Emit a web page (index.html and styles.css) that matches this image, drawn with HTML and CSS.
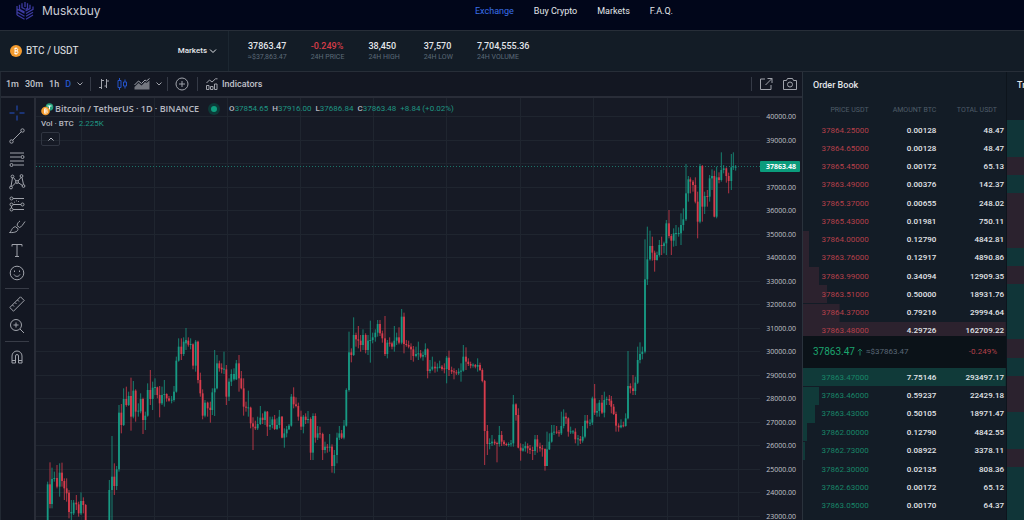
FILE: index.html
```html
<!DOCTYPE html>
<html lang="en">
<head>
<meta charset="utf-8">
<title>Muskxbuy Exchange</title>
<link rel="stylesheet" href="styles.css">
</head>
<body>
<header class="topbar">
  <a class="brand" href="#">
    <svg class="logo" viewBox="0 0 18 20" aria-hidden="true">
      <path d="M1 5v9M3.500 3.800v4.400l5 2.800M6 2.300v4.300l3 1.700M9 1v5M1 8l7.500 4.300M1 11l7.500 4.300M1 14l7.500 4.300M11.500 2.300v5l-2 1.200M14 3.800v3.700L9.500 10M17 5.400v3L10 12.500M17 11.200l-7 4M17 14l-7 4.300"/>
    </svg>
    <span>Muskxbuy</span>
  </a>
  <nav class="nav">
    <a class="active" href="#">Exchange</a><a href="#">Buy Crypto</a><a href="#">Markets</a><a href="#">F.A.Q.</a>
  </nav>
</header>

<section class="ticker">
  <div class="pair">
    <svg class="coin" viewBox="0 0 12 12" aria-hidden="true"><circle cx="6" cy="6" r="6" fill="#f39a2d"/><path d="M4.600 3.500h1.900a1.200 1.200 0 0 1 0 2.400H5h1.700a1.300 1.300 0 0 1 0 2.600H4.400M5 3.500v5M5.400 2.600v1M6.600 2.600v1M5.400 8.500v1M6.600 8.500v1" fill="none" stroke="#fff" stroke-width=".9"/></svg>
    <span class="pair-name">BTC / USDT</span>
    <button class="markets" type="button">Markets <svg viewBox="0 0 8 6" aria-hidden="true"><path d="M1 1.500l3 3 3-3"/></svg></button>
  </div>
  <dl class="stats">
    <div><dd>37863.47</dd><dt>≈$37,863.47</dt></div>
    <div><dd class="down">-0.249%</dd><dt>24H PRICE</dt></div>
    <div><dd>38,450</dd><dt>24H HIGH</dt></div>
    <div><dd>37,570</dd><dt>24H LOW</dt></div>
    <div><dd>7,704,555.36</dd><dt>24H VOLUME</dt></div>
  </dl>
</section>

<main class="workspace">
  <section class="chart">
    <div class="toolbar">
      <div class="intervals">
        <button type="button">1m</button><button type="button">30m</button><button type="button">1h</button><button type="button" class="active">D</button>
        <button type="button" aria-label="More intervals"><svg class="chev" viewBox="0 0 6 4"><path d="M.5.5L3 3 5.500.5"/></svg></button>
      </div>
      <div class="styles">
        <button type="button" aria-label="Bars"><svg class="i12" viewBox="0 0 12 12"><path d="M3.500 1v10M1 9.500h2.500M3.500 2.500H6M8.500 1v9M6.500 8h2M8.500 3H11"/></svg></button>
        <button type="button" class="active" aria-label="Candles"><svg class="i12" viewBox="0 0 12 12"><path d="M2 2.500h3v7H2zM3.500 0v2.500M3.500 9.500V12M7.500 4h3v4h-3zM9 1.500V4M9 8v2.500"/></svg></button>
        <button type="button" aria-label="Area"><svg class="i16" viewBox="0 0 16 12"><path d="M.5 7l4-4 3 2.500L11 2l1.500 1L15.500.5"/><path class="solid" d="M.5 9l4-4 3 2.500L11 4l1.500 1 3-2.500V11.500H.5z"/></svg></button>
        <button type="button" aria-label="More styles"><svg class="chev" viewBox="0 0 6 4"><path d="M.5.5L3 3 5.500.5"/></svg></button>
      </div>
      <div class="compare">
        <button type="button" aria-label="Compare"><svg class="i14" viewBox="0 0 14 14"><circle cx="7" cy="7" r="6"/><path d="M7 4v6M4 7h6"/></svg></button>
      </div>
      <button type="button" class="indicators"><svg class="i12" viewBox="0 0 12 12"><path d="M.5 11.500v-4H3v4zM4.500 11.500v-3H7v3zM8.500 11.500V6H11v5.500zM.5 5l3-3 2.500 2L9.500.8M9.500.8h2"/></svg>Indicators</button>
      <div class="actions">
        <button type="button" aria-label="Open in window"><svg class="i14" viewBox="0 0 14 14"><path d="M6 2H1.500v10.500H12V8M8.500 1.500H13V6M13 1.500L6.500 8"/></svg></button>
        <button type="button" aria-label="Snapshot"><svg class="i14" viewBox="0 0 14 14"><path d="M.5 3.500h3l1-2h5l1 2h3v9H.5z"/><circle cx="7" cy="7.500" r="2.500"/></svg></button>
      </div>
    </div>
    <div class="canvas">
      <div class="tools">
        <div class="group long">
          <button type="button" class="active" aria-label="Cross"><svg viewBox="0 0 18 18"><path d="M9 1.500v5M9 11.500v5M1.500 9h5M11.500 9h5"/></svg></button>
          <button type="button" aria-label="Trend line"><svg viewBox="0 0 18 18"><circle cx="3.500" cy="14.500" r="1.700"/><circle cx="14.500" cy="3.500" r="1.700"/><path d="M4.700 13.300l8.600-8.600"/></svg></button>
          <button type="button" aria-label="Fibonacci"><svg viewBox="0 0 18 18"><path d="M2 3h14M2 7h10.500M2 11h14M5.500 15H16"/><circle cx="14.500" cy="7" r="1.500"/><circle cx="3.500" cy="15" r="1.500"/></svg></button>
          <button type="button" aria-label="Patterns"><svg viewBox="0 0 18 18"><path d="M3 13.500L4.500 4.500M5.500 4.500L8 8M10 8l3.500-4M14 4.500l1.500 7M8 9.500L4 13.500M10 9.500l4.500 3"/><circle cx="4.500" cy="3.500" r="1.400"/><circle cx="13.500" cy="3" r="1.400"/><circle cx="9" cy="9" r="1.400"/><circle cx="3" cy="14.500" r="1.400"/><circle cx="15.500" cy="13" r="1.400"/></svg></button>
          <button type="button" aria-label="Forecast"><svg viewBox="0 0 18 18"><path d="M5 3.500h11M5 9.500h8M5 14.500h11M3.500 11v2"/><circle cx="3.500" cy="3.500" r="1.500"/><circle cx="3.500" cy="9.500" r="1.500"/><circle cx="14.500" cy="9.500" r="1.500"/><circle cx="3.500" cy="14.500" r="1.500"/><path stroke-dasharray="1 1.500" d="M6 7.500l3-2 3 2"/></svg></button>
          <button type="button" aria-label="Brush"><svg viewBox="0 0 18 18"><path d="M1.500 14.500c2-.5 2-5.500 6-5.800l2.500 2c.4 2.500-3 4.300-8.500 3.800zM9 7.500c.5-2.500 1.500-3.500 3-4.500M11.500 9.500c2-.5 3-2.500 5.500-6M9 7.500l2.500 2"/></svg></button>
          <button type="button" aria-label="Text"><svg viewBox="0 0 18 18"><path d="M4 5.500V3.500h10v2M9 3.500v12M7 15.500h4"/></svg></button>
          <button type="button" aria-label="Emoji"><svg viewBox="0 0 18 18"><circle cx="9" cy="9" r="6.800"/><path d="M6 10.500c1.500 2.500 4.500 2.500 6 0M6.500 6.500v1.500M11.500 6.500v1.500"/></svg></button>
        </div>
        <div class="group">
          <button type="button" aria-label="Measure"><svg viewBox="0 0 18 18"><path d="M1.800 12.500L12.500 1.800l3.700 3.700L5.500 16.200zM4.500 10l1.500 1.500M7 7.500L8.500 9M9.500 5L11 6.500"/></svg></button>
          <button type="button" aria-label="Zoom in"><svg viewBox="0 0 18 18"><circle cx="8" cy="8" r="5.500"/><path d="M12 12l4 4M8 5.500v5M5.500 8h5"/></svg></button>
        </div>
        <div class="group">
          <button type="button" aria-label="Magnet"><svg viewBox="0 0 18 18"><path d="M4 15V8a5 5 0 0 1 10 0v7h-3.500V8a1.500 1.500 0 0 0-3 0v7zM4 12.500h3.500M10.500 12.500H14"/></svg></button>
        </div>
      </div>
      <div class="plot">
        <svg id="plot" viewBox="36 98 767 422" preserveAspectRatio="xMinYMin slice" role="img" aria-label="BTC price chart"></svg>
        <div class="legend">
          <div class="symbol">
            <svg class="pair-icon" viewBox="0 0 13 13" aria-hidden="true"><circle cx="8.500" cy="4" r="3.800" fill="#26a17b"/><path d="M6.500 3h4M8.500 3v3.500" stroke="#fff"/><circle cx="4.500" cy="8" r="4.300" fill="#f39a2d"/><path d="M3.500 6h1.800a.9.900 0 0 1 0 2H3.500h2a1 1 0 0 1 0 2h-2zM4 5v6" stroke="#fff" stroke-width=".7" fill="none"/></svg>
            <span class="name">Bitcoin / TetherUS · 1D · BINANCE</span>
            <span class="live"></span>
            <div class="ohlc"><span><b>O</b>37854.65</span><span><b>H</b>37916.00</span><span><b>L</b>37686.84</span><span><b>C</b>37863.48</span><span>+8.84 (+0.02%)</span></div>
          </div>
          <div class="volume">Vol · BTC <span>2.225K</span></div>
          <button type="button" class="fold" aria-label="Collapse legend"><svg class="chev" viewBox="0 0 6 4"><path d="M.5 3.500L3 1l2.500 2.500"/></svg></button>
        </div>
      </div>
    </div>
  </section>

  <section class="book">
    <h2>Order Book</h2>
    <div class="asks-view">
      <table class="asks">
        <thead><tr><th>PRICE USDT</th><th>AMOUNT BTC</th><th>TOTAL USDT</th></tr></thead>
        <tbody>
          <tr><td>37864.25000</td><td>0.00128</td><td>48.47</td></tr>
          <tr><td>37864.65000</td><td>0.00128</td><td>48.47</td></tr>
          <tr><td>37865.45000</td><td>0.00172</td><td>65.13</td></tr>
          <tr><td>37863.49000</td><td>0.00376</td><td>142.37</td></tr>
          <tr><td>37865.37000</td><td>0.00655</td><td>248.02</td></tr>
          <tr><td>37865.43000</td><td>0.01981</td><td>750.11</td></tr>
          <tr style="--depth:3%"><td>37864.00000</td><td>0.12790</td><td>4842.81</td></tr>
          <tr style="--depth:3%"><td>37863.76000</td><td>0.12917</td><td>4890.86</td></tr>
          <tr style="--depth:8%"><td>37863.99000</td><td>0.34094</td><td>12909.35</td></tr>
          <tr style="--depth:12%"><td>37863.51000</td><td>0.50000</td><td>18931.76</td></tr>
          <tr style="--depth:18%"><td>37864.37000</td><td>0.79216</td><td>29994.64</td></tr>
          <tr style="--depth:100%"><td>37863.48000</td><td>4.29726</td><td>162709.22</td></tr>
        </tbody>
      </table>
    </div>
    <div class="last"><strong>37863.47</strong><svg viewBox="0 0 6 8" aria-hidden="true"><path d="M3 7.500V1M.8 3.200L3 1l2.200 2.200"/></svg><span>≈$37863.47</span><em>-0.249%</em></div>
    <table class="bids" aria-label="Bids">
      <tbody>
        <tr style="--depth:100%"><td>37863.47000</td><td>7.75146</td><td>293497.17</td></tr>
        <tr style="--depth:8%"><td>37863.46000</td><td>0.59237</td><td>22429.18</td></tr>
        <tr style="--depth:6%"><td>37863.43000</td><td>0.50105</td><td>18971.47</td></tr>
        <tr style="--depth:2%"><td>37862.00000</td><td>0.12790</td><td>4842.55</td></tr>
        <tr style="--depth:1%"><td>37862.73000</td><td>0.08922</td><td>3378.11</td></tr>
        <tr><td>37862.30000</td><td>0.02135</td><td>808.36</td></tr>
        <tr><td>37862.63000</td><td>0.00172</td><td>65.12</td></tr>
        <tr><td>37863.05000</td><td>0.00170</td><td>64.37</td></tr>
      </tbody>
    </table>
  </section>

  <section class="trades">
    <h2>Tr</h2>
    <div class="tape" id="tape"></div>
  </section>
</main>
<script src="chart.js"></script>
</body>
</html>
```

FILE: styles.css
```css
* { box-sizing: border-box; }
:root {
  --line: #272e38;
  --panel: #131c26;
  --bg: #131722;
  --plot: #161a25;
  --icon: #a0a3ab;
  --green: #1a9a7c;
  --red: #c4434d;
}
body {
  margin: 0;
  height: 100vh;
  overflow: hidden;
  display: flex;
  flex-direction: column;
  background: var(--panel);
  color: #e3e6ea;
  font: 9px/12px Roboto, "Liberation Sans", sans-serif;
}
a { color: inherit; text-decoration: none; }
button {
  display: inline-flex;
  align-items: center;
  padding: 0;
  border: 0;
  background: none;
  color: inherit;
  font: inherit;
}
svg { display: block; fill: none; stroke: currentColor; }
h2 { margin: 0; padding: 7px 10px 8px; font-size: 9px; line-height: 12px; font-weight: 500; }

.topbar {
  flex: none;
  display: flex;
  height: 31px;
  padding: 0 16px 8px;
  align-items: center;
  background: #01061a;
  border-bottom: 1px solid var(--line);
}
.brand { display: flex; align-items: center; gap: 8px; width: 459px; font: 12px/16px Inter, sans-serif; color: #c9ccd4; }
.logo { width: 18px; height: 20px; color: #3c3aa0; stroke-width: 1.3; }
.nav { display: flex; gap: 20px; }
.nav .active { color: #3a6fe8; }

.ticker { flex: none; display: flex; height: 41px; border-bottom: 1px solid var(--line); }
.pair { display: flex; align-items: center; width: 229px; padding: 0 11px 0 10px; border-right: 1px solid #1c2731; }
.coin { width: 12px; height: 12px; stroke: none; margin-right: 4px; }
.pair-name { font-size: 10px; }
.markets { margin-left: auto; gap: 2px; font-size: 8px; font-weight: 500; }
.markets svg { width: 8px; height: 6px; }
.stats { display: flex; gap: 24px; margin: 0; padding: 9px 19px; }
.stats div { display: flex; flex-direction: column; }
.stats dd { margin: 0; line-height: 12px; font-weight: 500; }
.stats dt { font-size: 7px; line-height: 10px; color: #5c6a78; }
.stats .down { color: #d33c48; }

.workspace { flex: 1; display: flex; min-height: 0; }
.chart { flex: 1; min-width: 0; display: flex; flex-direction: column; background: var(--bg); border-left: 1px solid #222933; border-right: 1px solid #2a323c; }
.toolbar { flex: none; display: flex; align-items: center; height: 26px; border-bottom: 2px solid #292d38; color: #c0c3ca; font-weight: 500; }
.toolbar > div { display: flex; align-items: center; height: 14px; }
.toolbar > div:not(.actions) { border-right: 1px solid #353a46; }
.intervals { gap: 6px; padding: 0 7px 0 5px; }
.styles { gap: 6px; padding: 0 5px 0 7px; }
.compare { padding: 0 8px 0 7px; }
.indicators { gap: 4px; padding-left: 8px; }
.actions { margin-left: auto; gap: 10px; padding: 0 5px 0 7px; border-left: 1px solid #353a46; }
.toolbar svg { color: var(--icon); }
.toolbar .active, .toolbar .active svg, .tools .active { color: #2453c8; }
.chev { width: 6px; height: 4px; }
.i12 { width: 12px; height: 12px; }
.i14 { width: 14px; height: 14px; }
.i16 { width: 16px; height: 12px; }
.solid { fill: #74777f; stroke: none; }

.canvas { flex: 1; display: flex; min-height: 0; }
.tools { flex: none; width: 35px; padding: 4px 5px 0 4px; border-right: 2px solid #292d38; color: var(--icon); overflow: hidden; }
.group { display: grid; grid-auto-rows: 22px; }
.group.long { height: 182px; grid-auto-rows: 1fr; }
.group + .group { border-top: 1px solid #383c47; margin-top: 4px; padding-top: 4px; }
.tools button { justify-content: center; }
.tools svg { width: 18px; height: 18px; }

.plot { flex: 1; min-width: 0; position: relative; overflow: hidden; background: var(--plot); }
#plot { width: 100%; height: 100%; }
.grid { stroke: #1f252f; stroke-width: 1; shape-rendering: crispEdges; }
.now { stroke: #1b7469; stroke-dasharray: 1 2; }
.wick { stroke-width: .8; }
.up { stroke: #179a83; fill: #179a83; }
.dn { stroke: #d83c4c; fill: #d83c4c; }
.body { stroke: none; }
.axis { fill: #c2c5cc; stroke: none; font: 7px "Open Sans", sans-serif; text-anchor: end; }
.tag { fill: #0b9c7c; stroke: none; }
.tag-text { fill: #fff; font-weight: 700; }

.legend { position: absolute; top: 4px; left: 5px; color: #b6b9c1; }
.symbol { display: flex; align-items: center; height: 14px; }
.pair-icon { width: 13px; height: 13px; stroke: none; }
.name { margin-left: 1px; font: 600 9px/14px "Open Sans", sans-serif; white-space: nowrap; }
.live { width: 6px; height: 6px; margin: 0 12px; border-radius: 50%; background: #0f9f7f; box-shadow: 0 0 0 3px #0d3a38; }
.ohlc { display: flex; gap: 4px; font-size: 8px; color: #1f9582; white-space: nowrap; }
.ohlc b { color: #b6b9c1; font-weight: 500; }
.volume { margin-top: 2px; font-size: 8px; font-weight: 500; }
.volume span { margin-left: 3px; font-weight: 400; color: #1f9582; }
.fold { justify-content: center; width: 19px; height: 14px; margin-top: 2px; border: 1px solid #303541; border-radius: 2px; }

.book { flex: none; width: 204px; border-right: 1px solid #0d141c; }
table { width: 100%; border-collapse: collapse; table-layout: fixed; font-size: 8px; line-height: 12px; font-weight: 500; }
.asks-view { height: 237px; overflow: hidden; }
.asks { height: 241px; }
.bids { height: 147px; }
th, td { padding: 0 2px 0 0; text-align: right; }
th { height: 22px; font-size: 7px; font-weight: 400; color: #4f5c69; }
th:last-child { padding-right: 9px; }
td { height: 18px; padding-top: 1px; }
tbody tr { background: linear-gradient(var(--fill), var(--fill)) no-repeat left / var(--depth, 0%) 100%; }
.asks { --fill: #2c222e; }
.bids { --fill: #103a39; }
td:first-child { font-weight: 400; }
.asks td:first-child { color: #b5404a; }
.bids td:first-child { color: #188667; }
.last { display: flex; align-items: center; height: 32px; padding: 0 9px 0 10px; background: #0b1218; color: #5a6776; }
.last strong { font-size: 10px; font-weight: 400; color: #1ba46e; }
.last svg { width: 6px; height: 8px; margin: 0 3px 0 2px; color: #1b7a59; }
.last span { font-size: 8px; }
.last em { margin-left: auto; font-style: normal; font-size: 8px; color: #b5404a; }

.trades { flex: none; width: 17px; overflow: hidden; }
.trades h2 { white-space: nowrap; }
.tape { display: grid; grid-auto-rows: 1fr; height: 402px; margin-top: 21px; }
.buy { background: #103538; }
.sell { background: #2b222e; }
```

FILE: chart.js
```js
// Each segment: x origin, y origin, then candles as x, open, close, high, low (three units per chart pixel).
const segments = [
  [90, 900, `53 670 553 545 680;60 553 612 487 625;66 612 537 503 625;73 537 534 515 545;81 534 560 495 565;89 560 518 490 590;96 518 543 488 560;103 543 565 535 600;110 565 580 535 605;117 578 636 570 655;124 640 636 600 660;131 640 608 600 645;139 608 613 585 630;146 613 640 605 650;153 640 603 577 645;160 603 615 592 640;167 615 670 612 680;
238 670 570 540 680;246 570 530 408 660;253 530 558 490 585;260 558 508 498 570;267 508 338 315 515;274 338 375 312 400;281 375 297 265 378;289 297 315 260 320;296 315 288 275 318;303 288 350 233 392;310 350 272 243 355;317 272 335 268 365;325 335 332 310 350;332 334 297 280 340;339 297 360 293 402;346 360 347 335 390;353 347 270 250 350;361 270 297 210 315;368 297 263 245 330;375 263 261 235 285;382 262 285 260 295;389 285 310 258 352;396 310 285 260 315;403 285 282 240 320;410 282 295 280 305;417 295 302 288 305;425 302 299 288 310;432 300 275 258 305;439 275 182 170 278;446 182 140 115 185;454 140 162 115 180;461 162 125 112 168;468 130 120 84 150;475 122 134 112 140;482 134 132 115 148;489 133 197 130 208;497 197 125 120 215;504 125 240 122 250;511 240 280 218 290;518 280 347 268 358;525 347 308 300 352;533 308 325 305 350;541 323 330 305 368;547 330 277 265 345;554 277 265 150 348;561 265 190 165 268;568 190 205 182 215;575 203 208 190 220;582 209 206 155 222;589 208 290 195 315`],
  [660, 900, `27 290 245 235 303;34 245 222 208 258;42 238 222 205 242;49 238 190 180 240;57 190 235 165 275;64 235 265 213 268;71 265 320 235 347;78 320 323 305 335;85 325 322 272 350;92 323 370 320 385;99 370 380 352 450;106 380 385 362 390;113 385 372 350 390;121 372 353 318 375;128 353 360 340 372;135 360 335 332 375;142 335 380 333 408;150 380 375 350 390;157 375 358 350 385;164 358 387 345 390;171 387 375 355 390;178 375 350 330 385;186 350 413 348 415;193 413 400 385 443;200 400 388 378 412;207 388 377 372 390;214 377 290 282 380;221 290 313 262 325;228 313 318 292 322;235 318 350 308 362;243 350 380 332 390;250 380 350 345 400;257 350 360 340 372;264 360 357 333 370;272 357 458 352 480;279 458 348 340 480;286 348 413 340 428;293 413 400 378 420;300 400 403 380 415;308 402 450 398 480;315 450 440 425 460;322 440 443 432 458;329 443 440 402 455;336 440 498 433 518;343 498 465 450 520;351 465 413 398 490;358 413 400 378 420;365 400 413 390 417;372 413 377 360 418;379 377 270 265 380;387 270 157 95 275;394 157 165 145 187;401 165 105 52 168;408 105 118 98 140;415 118 122 78 145;422 122 135 105 155;429 135 105 88 150;437 105 150 100 160;444 150 122 105 165;451 123 120 62 188;458 120 112 98 130;466 112 98 88 125;473 98 72 60 110;480 72 100 60 108;487 100 115 92 128;495 115 162 48 168;502 162 128 120 175;509 128 131 112 140;516 130 140 125 148;523 140 122 78 155;530 122 112 98 135;537 112 128 82 133;545 128 50 27 133`],
  [1200, 900, `12 50 132 38 160;19 132 135 120 140;26 135 140 122 145;33 140 148 130 180;40 148 168 138 185;48 168 162 140 172;55 163 160 125 180;62 160 170 150 175;69 170 165 155 182;76 165 148 130 172;83 148 213 145 235;90 213 208 180 220;97 208 200 170 212;105 200 205 185 218;112 205 202 190 215;119 203 200 182 205;126 200 207 195 212;133 205 208 190 220;140 207 173 168 250;147 173 210 152 228;155 210 215 200 222;162 214 217 205 238;169 217 220 210 225;176 220 215 205 225;183 215 212 190 245;190 212 170 135 215;198 170 185 142 210;205 185 192 175 198;212 192 197 185 205;219 197 194 190 203;226 195 200 192 205;233 200 195 175 215;240 195 210 188 213;247 210 243 205 247;254 243 393 240 495;262 393 432 375 465;269 432 429 415 448;276 430 425 405 438;284 425 430 418 435;291 429 432 425 487;298 432 405 378 440;305 405 425 393 438;312 425 432 420 437;319 432 435 428 438;326 435 432 427 440;333 433 430 420 440;340 430 313 285 440;348 313 345 310 362;355 345 443 325 445;362 443 452 430 482;369 452 445 432 455;376 445 438 425 455;383 438 445 430 460;390 445 450 435 462;398 450 453 440 480;405 453 418 405 465;412 418 440 405 458;420 440 445 428 455;427 445 448 435 470;435 447 498 445 512;441 498 448 395 498;448 448 425 400 450;455 425 398 375 428;462 398 395 375 405;470 395 398 378 402;477 397 400 390 410;484 400 378 335 405;491 378 350 328 385;498 350 355 338 372;505 355 395 352 410;512 397 394 380 402;519 397 394 390 402;526 395 418 385 430;534 418 415 405 437;541 417 422 408 432;548 422 410 378 428;555 410 362 345 415;562 362 370 345 385;570 371 368 358 378;577 368 295 290 375;584 295 338 252 345;591 338 333 310 350;598 333 308 300 350`],
  [1710, 840, `96 368 398 345 402;103 398 360 335 412;110 360 357 350 375;118 357 362 345 375;124 362 380 348 400;131 380 402 372 405;138 402 437 395 455;146 437 442 430 455;153 442 436 418 445;160 436 439 425 442;167 438 415 400 440;174 415 318 213 418;181 318 325 310 340;189 325 333 285 345;196 333 308 290 345;203 308 240 200 312;210 240 222 187 250;217 222 215 200 238`],
  [1710, 420, `225 635 418 298 640;232 418 358 260 435;240 358 318 272 362;247 318 338 290 362;254 338 360 332 395;261 360 345 335 362;268 345 315 300 350;275 315 318 290 345;282 318 310 305 340;289 310 250 240 345;297 250 288 210 295;304 288 302 282 345;311 302 280 265 320;318 282 279 255 318;326 282 279 262 290;333 280 255 220 315;340 255 238 205 272;348 238 160 72 243;355 160 118 108 185;361 118 125 112 160;369 125 135 120 155;376 135 185 112 190;383 185 245 155 295;390 245 78 72 250;397 78 200 75 245;404 200 168 155 222;412 168 171 150 200;419 170 115 105 185;426 115 108 88 150;433 108 230 92 232;440 230 112 80 235;447 112 120 97 130;454 120 90 37 125;461 90 85 75 100;469 85 108 82 128;476 108 123 98 160;484 123 82 42 150;490 82 79 37 90;497 83 80 75 92`]
];

const rows = [];
const labels = [];
for (let i = 0; i < 18; i++) {
  const y = 116.5 + i * 23.5;
  rows.push(`<line class="grid" x1="36" x2="760" y1="${y}" y2="${y}"/>`);
  labels.push(`<text class="axis" x="796" y="${y + 2.5}">${40000 - i * 1000}.00</text>`);
}
const columns = [81, 154, 227, 300, 373, 446, 520, 593, 667, 738]
  .map(x => `<line class="grid" x1="${x}" x2="${x}" y1="98" y2="520"/>`);

const candles = segments.flatMap(([dx, dy, text]) => text.split(";").map(item => {
  const [x, open, close, high, low] = item.trim().split(" ").map(Number);
  const cx = (dx + x) / 3;
  const at = v => (dy + v) / 3;
  const top = at(Math.min(open, close));
  const height = Math.max(1, Math.abs(close - open) / 3);
  return `<g class="${close > open ? "dn" : "up"}"><line class="wick" x1="${cx}" x2="${cx}" y1="${at(high)}" y2="${at(low)}"/><rect class="body" x="${cx - 0.9}" y="${top}" width="1.8" height="${height}"/></g>`;
}));

document.getElementById("plot").innerHTML =
  rows.join("") + columns.join("") +
  '<line class="now" x1="36" x2="760" y1="166.5" y2="166.5"/>' +
  candles.join("") + labels.join("") +
  '<rect class="tag" x="760" y="161" width="40" height="11" rx="1"/>' +
  '<text class="axis tag-text" x="796" y="169">37863.48</text>';

document.getElementById("tape").innerHTML = [..."BBSBSSSBSBBBSBSSBBSBBB"]
  .map(side => `<div class="${side === "B" ? "buy" : "sell"}"></div>`).join("");
```
